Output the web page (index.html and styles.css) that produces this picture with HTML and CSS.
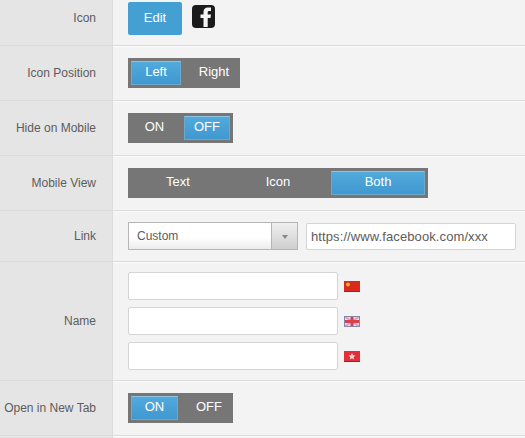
FILE: index.html
```html
<!DOCTYPE html>
<html lang="en">
<head>
  <meta charset="UTF-8">
  <title>Button settings</title>
  <link rel="stylesheet" href="styles.css">
</head>
<body>
  <div class="form">
    <div class="row row-icon">
      <div class="label">Icon</div>
      <div class="field">
        <button class="edit-btn">Edit</button>
        <svg class="fb" width="23" height="23" viewBox="0 0 23 23">
          <rect width="23" height="23" rx="4" fill="#1b1b1b"/>
          <path d="M11.500 22V13H8.500V9.500h3V7c0-3 1.700-4.500 4.300-4.500H19v3.500h-1.700c-1.200 0-1.600.5-1.600 1.500v2H19l-.5 3.500h-2.800V22z" fill="#f4f4f4"/>
        </svg>
      </div>
    </div>

    <div class="row">
      <div class="label">Icon Position</div>
      <div class="field">
        <div class="toggle">
          <span class="seg seg-left active">Left</span>
          <span class="seg seg-right">Right</span>
        </div>
      </div>
    </div>

    <div class="row">
      <div class="label">Hide on Mobile</div>
      <div class="field">
        <div class="toggle">
          <span class="seg seg-on">ON</span>
          <span class="seg seg-off active">OFF</span>
        </div>
      </div>
    </div>

    <div class="row">
      <div class="label">Mobile View</div>
      <div class="field">
        <div class="toggle">
          <span class="seg seg-wide">Text</span>
          <span class="seg seg-wide">Icon</span>
          <span class="seg seg-wide active">Both</span>
        </div>
      </div>
    </div>

    <div class="row row-link">
      <div class="label">Link</div>
      <div class="field">
        <div class="select">
          <span class="select-text">Custom</span>
          <span class="select-arrow"></span>
        </div>
        <input class="text-input link-input" type="text" value="https://www.facebook.com/xxx">
      </div>
    </div>

    <div class="row row-name">
      <div class="label">Name</div>
      <div class="field name-list">
        <div class="name-item">
          <input class="text-input name-input" type="text">
          <svg class="flag" width="16" height="11" viewBox="0 0 16 11">
            <rect width="16" height="11" fill="#d92a20"/>
            <circle cx="4" cy="3.500" r="2" fill="#eeb32a"/>
            <rect y="10" width="16" height="1" fill="#a81c14"/>
          </svg>
        </div>
        <div class="name-item">
          <input class="text-input name-input" type="text">
          <svg class="flag" width="16" height="11" viewBox="0 0 16 11">
            <rect width="16" height="11" fill="#eadfe6"/>
            <path d="M0 0l16 11M16 0L0 11" stroke="#d9a6b8" stroke-width="2"/>
            <path d="M8 1v9M1 5.500h14" stroke="#d8404e" stroke-width="3"/>
            <rect x="0.500" y="0.500" width="15" height="10" fill="none" stroke="#8884ae"/>
          </svg>
        </div>
        <div class="name-item">
          <input class="text-input name-input" type="text">
          <svg class="flag" width="16" height="11" viewBox="0 0 16 11">
            <rect width="16" height="11" fill="#e2303a"/>
            <path d="M8 2l1 2.300 2.500.2-1.900 1.600.6 2.400L8 7.200 5.800 8.500l.6-2.400L4.500 4.500 7 4.300z" fill="#f8dcdc"/>
            <rect y="10" width="16" height="1" fill="#ab1a20"/>
          </svg>
        </div>
      </div>
    </div>

    <div class="row">
      <div class="label">Open in New Tab</div>
      <div class="field">
        <div class="toggle">
          <span class="seg seg-on2 active">ON</span>
          <span class="seg seg-off2">OFF</span>
        </div>
      </div>
    </div>

    <div class="row row-last">
      <div class="label"></div>
      <div class="field"></div>
    </div>
  </div>
</body>
</html>
```

FILE: styles.css
```css
* { box-sizing: border-box; }
html, body { margin: 0; padding: 0; height: 100%; overflow: hidden; }
body {
  font-family: "Liberation Sans", Arial, sans-serif;
  font-size: 12px;
  color: #5c5c5c;
  background: #f3f3f3;
}

.row {
  display: flex;
  height: 55px;
  border-bottom: 1px solid #dcdcdc;
  box-shadow: 0 1px 0 #fafafa;
}
.row-icon { height: 46px; }
.row-link { height: 51px; }
.row-name { height: 119px; }
.row-last { height: 20px; border-bottom: 0; }

.label {
  flex: 0 0 113px;
  display: flex;
  align-items: center;
  justify-content: flex-end;
  padding-right: 16px;
  background: #e5e5e5;
  border-right: 1px solid #dcdcdc;
}
.field {
  flex: 1;
  display: flex;
  align-items: center;
  padding-left: 15px;
}

.row-icon .field { align-items: flex-start; padding-top: 2px; }
.row-icon .label { padding-bottom: 9px; }
.edit-btn {
  width: 54px;
  height: 33px;
  border: 0;
  border-radius: 2px;
  background: #449fd2;
  color: #fff;
  font: 13px "Liberation Sans", Arial, sans-serif;
  padding: 0 0 2px;
}
.fb { margin: 3px 0 0 10px; }

.toggle {
  display: flex;
  height: 30px;
  background: #767676;
  color: #fff;
  font-size: 13px;
}
.seg {
  display: flex;
  align-items: center;
  justify-content: center;
  padding-bottom: 3px;
}
.seg.active {
  margin: 3px;
  background: linear-gradient(#52a9dc, #3f98cf);
  border: 1px solid #6fa9c9;
  border-top-color: #8cc4e4;
  color: #fff;
}
.seg-left { width: 50px; }
.seg-right { width: 56px; padding-left: 4px; }
.seg-on { width: 53px; }
.seg-off { width: 46px; }
.seg-wide { width: 100px; }
.seg-wide.active { width: 94px; }
.seg-on2 { width: 47px; }
.seg-off2 { width: 52px; padding-left: 4px; }

.select {
  display: flex;
  width: 170px;
  height: 28px;
  border: 1px solid #b5b5b5;
  background: linear-gradient(#fff 55%, #ececec);
}
.select-text { flex: 1; padding: 6px 0 0 8px; }
.select-arrow {
  position: relative;
  width: 26px;
  border-left: 1px solid #b5b5b5;
  background: linear-gradient(#efefef, #cfcfcf);
}
.select-arrow::after {
  content: '';
  position: absolute;
  left: 10px;
  top: 12px;
  border: 3px solid transparent;
  border-top: 4px solid #888;
  border-bottom: 0;
}

.text-input {
  height: 28px;
  border: 1px solid #d4d4d4;
  border-radius: 2px;
  background: #fff;
  color: #5c5c5c;
  font: 13px "Liberation Sans", Arial, sans-serif;
  outline: none;
}
.link-input {
  width: 210px;
  height: 27px;
  margin-left: 8px;
  padding: 0 4px;
  letter-spacing: 0.1px;
}

.name-list {
  flex-direction: column;
  align-items: flex-start;
  justify-content: center;
  gap: 7px;
}
.name-item { display: flex; align-items: center; gap: 6px; }
.name-input { width: 210px; }
.flag { display: block; }
```
